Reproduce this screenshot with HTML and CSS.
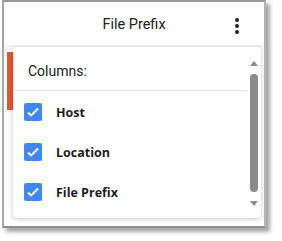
FILE: index.html
```html
<!DOCTYPE html>
<html lang="en">
<head>
  <meta charset="UTF-8">
  <title>File Prefix</title>
  <link rel="stylesheet" href="styles.css">
</head>
<body>
<div class="frame">
  <div class="header">
    <span class="title">File Prefix</span>
    <span class="kebab"><i></i><i></i><i></i></span>
  </div>
  <div class="tab-edge"></div>

  <div class="menu">
    <div class="menu-list">
      <div class="menu-title">Columns:</div>
      <label class="item"><span class="check"><svg viewBox="0 0 18 18" width="18" height="18"><path d="M4 9.5l3.2 3L14 5.5" fill="none" stroke="#fff" stroke-width="1.8"/></svg></span>Host</label>
      <label class="item"><span class="check"><svg viewBox="0 0 18 18" width="18" height="18"><path d="M4 9.5l3.2 3L14 5.5" fill="none" stroke="#fff" stroke-width="1.8"/></svg></span>Location</label>
      <label class="item"><span class="check"><svg viewBox="0 0 18 18" width="18" height="18"><path d="M4 9.5l3.2 3L14 5.5" fill="none" stroke="#fff" stroke-width="1.8"/></svg></span>File Prefix</label>
    </div>
    <div class="scrollbar">
      <span class="arrow up"></span>
      <span class="thumb"></span>
      <span class="arrow down"></span>
    </div>
  </div>
</div>
</body>
</html>
```

FILE: styles.css
```css
html, body {
  margin: 0;
  background: #fff;
}
body {
  width: 282px;
  height: 241px;
  overflow: hidden;
  font-family: Roboto, "Liberation Sans", sans-serif;
  color: #202020;
}
.frame {
  position: relative;
  margin-left: 2px;
  width: 260px;
  height: 224px;
  border-top: 2px solid #9a9a9a;
  border-left: 2px solid #a8a8a8;
  border-right: 2px solid #b5b5b5;
  border-bottom: 2px solid #8e8e8e;
  box-shadow: 4px 4px 4px rgba(0,0,0,0.35);
  background: #fff;
}
.header {
  height: 43px;
  display: flex;
  align-items: center;
  justify-content: center;
  position: relative;
  box-shadow: 0 3px 4px rgba(0,0,0,0.07);
}
.title {
  font-size: 14.5px;
  margin-top: 2px;
}
.kebab {
  position: absolute;
  right: 25px;
  top: 16px;
  display: flex;
  flex-direction: column;
  gap: 2px;
}
.kebab i {
  width: 4px;
  height: 4px;
  border-radius: 50%;
  background: #222;
}
.tab-edge {
  position: absolute;
  left: 3px;
  top: 50px;
  width: 8px;
  height: 58px;
  background: #e8532d;
}
.menu {
  position: absolute;
  left: 9px;
  top: 45px;
  width: 248px;
  height: 171px;
  background: #fff;
  border-radius: 4px;
  box-shadow: 0 1px 5px rgba(0,0,0,0.22);
  display: flex;
}
.menu-list {
  flex: 1;
}
.menu-title {
  height: 43px;
  line-height: 48px;
  padding-left: 15px;
  font-size: 14px;
  border-bottom: 1px solid #e2e2e2;
  margin-bottom: 1px;
}
.item {
  display: flex;
  align-items: center;
  height: 40px;
  padding-left: 11px;
  font-family: "Open Sans", sans-serif;
  font-weight: bold;
  font-size: 12.5px;
  color: #1c1c1c;
}
.check {
  width: 18px;
  height: 18px;
  border-radius: 2px;
  background: #4285f4;
  margin-right: 14px;
  display: flex;
}
.scrollbar {
  width: 14px;
  display: flex;
  flex-direction: column;
  align-items: center;
  padding-top: 14px;
}
.arrow {
  width: 0;
  height: 0;
  border-left: 4px solid transparent;
  border-right: 4px solid transparent;
}
.arrow.up {
  border-bottom: 5px solid #8a8a8a;
}
.arrow.down {
  border-top: 5px solid #8a8a8a;
  margin-top: 9px;
}
.thumb {
  width: 8px;
  height: 118px;
  margin-top: 8px;
  border-radius: 4px;
  background: #8a8a8a;
}
```
